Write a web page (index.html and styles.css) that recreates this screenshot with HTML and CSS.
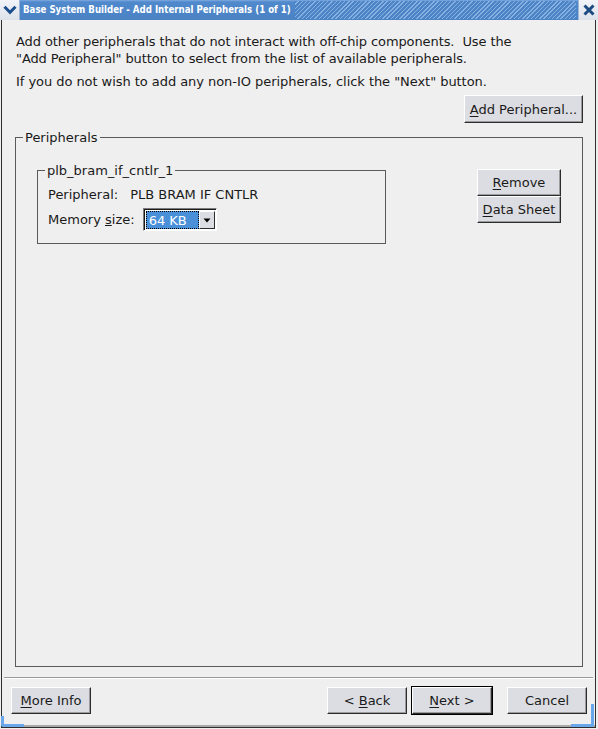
FILE: index.html
```html
<!DOCTYPE html>
<html>
<head>
<meta charset="utf-8">
<link rel="stylesheet" href="styles.css">
</head>
<body>
<div class="window">
  <div class="titlebar">
    <div class="tb-btn tb-menu">
      <svg width="14" height="10" viewBox="0 0 14 10"><path d="M1.5 1.8 L7 7.3 L12.5 1.8" fill="none" stroke="#1c4e8e" stroke-width="3"/></svg>
    </div>
    <div class="title">Base System Builder - Add Internal Peripherals (1 of 1)</div>
    <div class="stripes"></div>
    <div class="tb-btn tb-close">
      <svg width="12" height="12" viewBox="0 0 12 12"><path d="M1.5 1.5 L10.5 10.5 M10.5 1.5 L1.5 10.5" fill="none" stroke="#1c4a80" stroke-width="3"/></svg>
    </div>
  </div>
  <div class="client">
    <div class="main">
      <p class="intro">Add other peripherals that do not interact with off-chip components.&nbsp; Use the<br>"Add Peripheral" button to select from the list of available peripherals.</p>
      <p class="intro second">If you do not wish to add any non-IO peripherals, click the "Next" button.</p>
      <div class="add-row"><button class="btn btn-add"><u>A</u>dd Peripheral...</button></div>
      <fieldset class="frame frame-outer">
        <legend>Peripherals</legend>
        <div class="periph-area">
          <fieldset class="frame frame-inner">
            <legend>plb_bram_if_cntlr_1</legend>
            <div class="row row-type"><span>Peripheral:</span><span>PLB BRAM IF CNTLR</span></div>
            <div class="row row-mem"><span>Memory <u>s</u>ize:</span>
              <div class="combo">
                <div class="combo-value"><span class="combo-sel">64 KB</span></div>
                <div class="combo-arrow"><svg width="8" height="5" viewBox="0 0 8 5"><path d="M0.5 0.5 H7.5 L4 4.5 Z" fill="#000"/></svg></div>
              </div>
            </div>
          </fieldset>
          <div class="side-btns">
            <button class="btn btn-side"><u>R</u>emove</button>
            <button class="btn btn-side"><u>D</u>ata Sheet</button>
          </div>
        </div>
      </fieldset>
    </div>
    <div class="sep"></div>
    <div class="actions">
      <button class="btn btn-act"><u>M</u>ore Info</button>
      <div class="spacer"></div>
      <button class="btn btn-act">&lt; <u>B</u>ack</button>
      <div class="default-wrap"><button class="btn btn-act"><u>N</u>ext &gt;</button></div>
      <button class="btn btn-act btn-cancel">Cancel</button>
    </div>
  </div>
  <div class="corner corner-bl"></div>
  <div class="corner corner-br"></div>
</div>
</body>
</html>
```
FILE: styles.css
```css
html, body {
  margin: 0;
  padding: 0;
}
body {
  width: 598px;
  height: 729px;
  overflow: hidden;
  background: #efefef;
  font-family: "DejaVu Sans", sans-serif;
  font-size: 13px;
  line-height: 17px;
  color: #1a1a1a;
}
.window {
  position: relative;
  width: 598px;
  height: 729px;
  display: flex;
  flex-direction: column;
}
.titlebar {
  height: 20px;
  display: flex;
  align-items: stretch;
  background: linear-gradient(#7eaae0 0, #5089cc 2px, #4a82c4 100%);
  flex: none;
}
.tb-btn {
  width: 20px;
  height: 20px;
  box-sizing: border-box;
  background: linear-gradient(#f2f4f8, #dde2ea);
  display: flex;
  align-items: center;
  justify-content: center;
  flex: none;
}
.tb-menu {
  border-right: 1px solid #9fb6d4;
}
.tb-close {
  border-left: 1px solid #9fb6d4;
}
.title {
  padding-left: 3px;
  color: #fff;
  font-family: "DejaVu Sans Condensed", "DejaVu Sans", sans-serif;
  font-weight: bold;
  font-size: 9.6px;
  line-height: 20px;
  white-space: nowrap;
  flex: none;
}
.stripes {
  flex: 1;
  margin: 1px 2px 1px 4px;
  background: repeating-linear-gradient(135deg, #4c84c6 0, #4c84c6 2px, #86b0e2 2px, #86b0e2 3px);
}
.client {
  flex: 1;
  display: flex;
  flex-direction: column;
  margin: 0 2px 1px 1px;
  border: 1px solid #2e2e2e;
  border-top: none;
  box-shadow: inset 0 -2px 0 #a8a8a8;
}
.main {
  flex: 1;
  display: flex;
  flex-direction: column;
  padding: 13px 12px 0 13px;
}
.intro {
  margin: 0 0 0 1px;
  letter-spacing: -0.1px;
}
.intro.second {
  margin-top: 6px;
  letter-spacing: -0.05px;
}
.add-row {
  display: flex;
  justify-content: flex-end;
  margin-top: 5px;
}
.btn {
  font-family: "DejaVu Sans", sans-serif;
  font-size: 13px;
  color: #1a1a1a;
  height: 27px;
  padding: 0;
  margin: 0;
  background: #dcdde2;
  border: 1px solid;
  border-color: #ffffff #2c2c2c #2c2c2c #ffffff;
  box-shadow: inset -1px -1px 0 #9c9c9c;
  border-radius: 0;
  box-sizing: border-box;
}
.btn u {
  text-underline-offset: 2px;
}
.btn-add {
  width: 119px;
  height: 28px;
}
.frame {
  margin: 0;
  padding: 0;
  border: 1px solid #5a5a5a;
  min-inline-size: 0;
}
.frame legend {
  padding: 0 2px;
  font-size: 13px;
  line-height: 17px;
}
.frame-outer {
  flex: 1;
  margin-top: 6px;
}
.frame-outer > legend {
  margin-left: 7px;
}
.periph-area {
  display: flex;
  align-items: flex-start;
  padding: 0 21px 0 21px;
}
.frame-inner {
  width: 349px;
  box-sizing: border-box;
  margin-top: 16px;
  padding: 7px 10px 12px 10px;
}
.frame-inner > legend {
  margin-left: -3px;
}
.row {
  display: flex;
  align-items: center;
}
.row-type {
  gap: 12px;
}
.row-mem {
  margin-top: 5px;
  gap: 8px;
}
.combo {
  width: 74px;
  height: 23px;
  box-sizing: border-box;
  display: flex;
  border: 1px solid;
  border-color: #7c7c7c #ffffff #ffffff #7c7c7c;
  box-shadow: inset 1px 1px 0 #1a1a1a;
  background: #ffffff;
  padding: 2px 1px 1px 2px;
}
.combo-value {
  flex: 1;
  background: #4a90d9;
  outline: 1px dotted #000;
  outline-offset: -1px;
  color: #fff;
  display: flex;
  align-items: center;
  padding-left: 3px;
}
.combo-sel {
  line-height: 15px;
}
.combo-arrow {
  width: 16px;
  box-sizing: border-box;
  background: #dcdde2;
  border: 1px solid;
  border-color: #ffffff #2c2c2c #2c2c2c #ffffff;
  display: flex;
  align-items: center;
  justify-content: center;
}
.side-btns {
  margin-left: auto;
  margin-top: 23px;
  display: flex;
  flex-direction: column;
}
.btn-side {
  width: 84px;
}
.sep {
  margin: 10px 2px 0 2px;
  border-top: 1px solid #9a9a9a;
  border-bottom: 1px solid #ffffff;
}
.actions {
  display: flex;
  align-items: center;
  padding: 7px 8px 12px 9px;
}
.spacer {
  flex: 1;
}
.btn-act {
  width: 80px;
}
.default-wrap {
  margin-left: 4px;
  border: 1px solid #000;
  display: flex;
}
.btn-cancel {
  margin-left: 14px;
}
.corner {
  position: absolute;
  width: 20px;
  height: 8px;
  bottom: 2px;
  border-bottom: 3px solid #6aa6ea;
}
.corner-bl {
  left: 1px;
  border-left: 3px solid #6aa6ea;
  border-bottom-left-radius: 3px;
}
.corner-br {
  right: 4px;
  height: 20px;
  border-right: 3px solid #6aa6ea;
  border-bottom-right-radius: 3px;
}
```
